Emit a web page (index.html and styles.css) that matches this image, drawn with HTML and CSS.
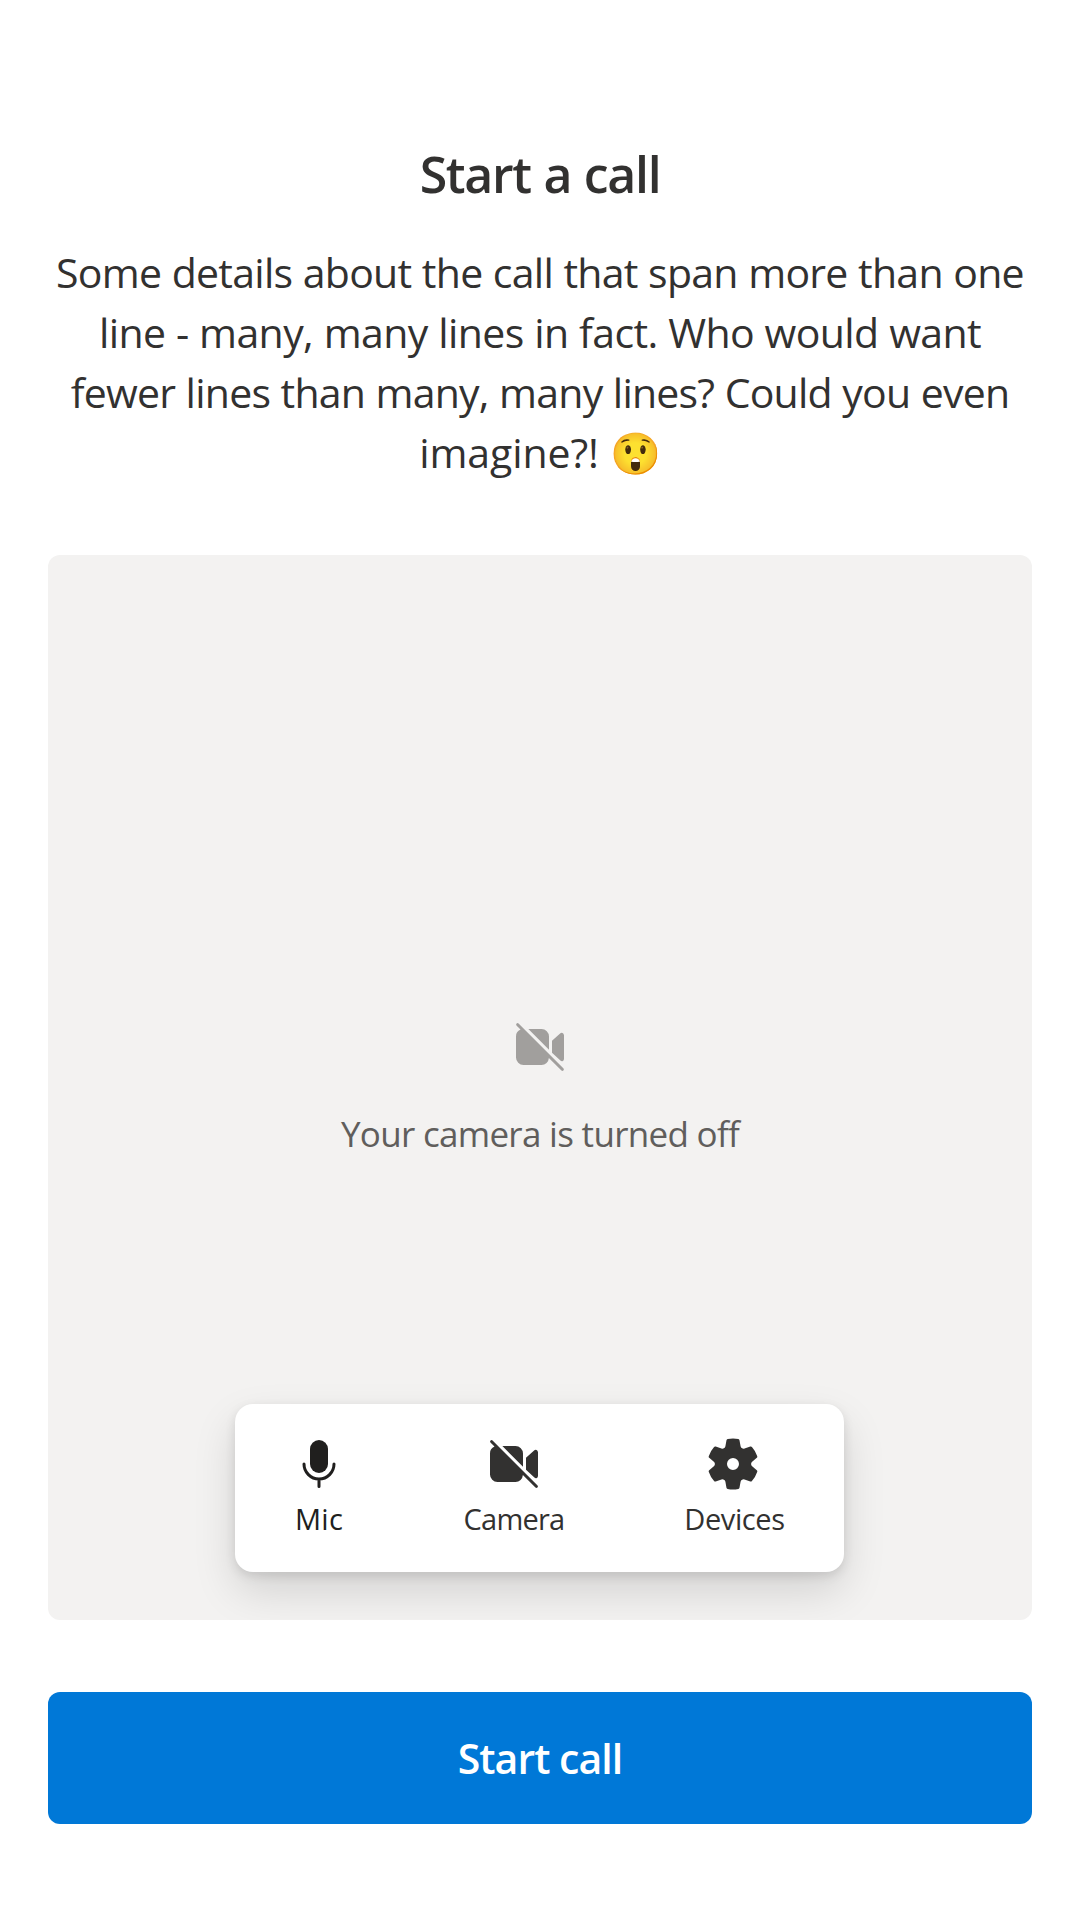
FILE: index.html
```html
<!DOCTYPE html>
<html lang="en">
<head>
<meta charset="utf-8">
<title>Start a call</title>
<link rel="stylesheet" href="styles.css">
</head>
<body>
<svg width="0" height="0" class="defs" aria-hidden="true">
  <symbol id="video-off" viewBox="0 0 20 20">
    <path d="M6.12 4H10.5A2.5 2.5 0 0 1 13 6.5V10.88Z"/>
    <path d="M14 7.9 16.7 5.5Q17.1 5.15 17.5 5.35T18 6.1V13.9Q18 14.45 17.6 14.65T16.8 14.5L14 11.88Z"/>
    <path d="M2.85 2.15a.5.5 0 0 0-.7.7L3.5 4.2A2.5 2.5 0 0 0 2 6.5v7A2.5 2.5 0 0 0 4.5 16h6a2.5 2.5 0 0 0 2.46-2.34l4.19 4.19a.5.5 0 0 0 .7-.7Z"/>
  </symbol>
</svg>
<main class="screen">
  <h1 class="title">Start a call</h1>
  <p class="details">
    <span class="line l1">Some details about the call that span more than one</span>
    <span class="line l2">line - many, many lines in fact. Who would want</span>
    <span class="line l3">fewer lines than many, many lines? Could you even</span>
    <span class="line l4">imagine?! <span class="emoji">😲</span></span>
  </p>
  <section class="preview">
    <div class="status">
      <svg class="icon"><use href="#video-off"/></svg>
      <p class="status-text">Your camera is turned off</p>
    </div>
    <div class="toolbar">
      <button class="tool mic">
        <svg class="icon" viewBox="0 0 20 20"><rect x="7" y="2" width="6" height="11" rx="3"/><path class="stroke" d="M5 10a5 5 0 0 0 10 0M10 15v2.5"/></svg>
        <span class="label">Mic</span>
      </button>
      <button class="tool camera">
        <svg class="icon"><use href="#video-off"/></svg>
        <span class="label">Camera</span>
      </button>
      <button class="tool devices">
        <svg class="icon" viewBox="0 0 20 20"><path d="M1.91 7.38A8.49 8.49 0 0 1 3.69 4.3a.5.5 0 0 1 .54-.13l1.92.68a1 1 0 0 0 1.32-.76l.36-2a.5.5 0 0 1 .4-.4 8.53 8.53 0 0 1 3.55 0c.2.04.35.2.38.4l.37 2a1 1 0 0 0 1.32.76l1.92-.68a.5.5 0 0 1 .54.13 8.49 8.49 0 0 1 1.78 3.08c.06.2 0 .4-.15.54l-1.56 1.32a1 1 0 0 0 0 1.52l1.56 1.32a.5.5 0 0 1 .15.54 8.49 8.49 0 0 1-1.78 3.08.5.5 0 0 1-.54.13l-1.92-.68a1 1 0 0 0-1.32.76l-.37 2a.5.5 0 0 1-.39.4 8.53 8.53 0 0 1-3.55 0 .5.5 0 0 1-.4-.4l-.35-2a1 1 0 0 0-1.32-.76l-1.92.68a.5.5 0 0 1-.54-.13 8.49 8.49 0 0 1-1.78-3.08.5.5 0 0 1 .15-.54l1.56-1.32a1 1 0 0 0 0-1.52L2.06 7.92a.5.5 0 0 1-.15-.54ZM8 10a2 2 0 1 0 4 0 2 2 0 0 0-4 0Z"/></svg>
        <span class="label">Devices</span>
      </button>
    </div>
  </section>
  <button class="start">Start call</button>
</main>
</body>
</html>
```
FILE: styles.css
```css
* { box-sizing: border-box; margin: 0; }
body {
  background: #fff;
  color: #323130;
  font-family: "Open Sans", "Noto Sans", sans-serif;
}
button { border: 0; background: none; padding: 0; font: inherit; color: inherit; }
.defs { position: absolute; }
.screen {
  width: 1080px;
  height: 1920px;
  padding: 138px 48px 96px;
  display: flex;
  flex-direction: column;
  overflow: hidden;
}
.title {
  height: 72px;
  line-height: 72px;
  font-size: 50px;
  font-weight: 600;
  letter-spacing: -1.3px;
  word-spacing: 1px;
  text-align: center;
}
.details {
  margin-top: 32px;
  font-size: 41px;
  line-height: 60px;
  word-spacing: .5px;
  text-align: center;
  white-space: nowrap;
}
.line { display: block; }
.l1 { letter-spacing: -.73px; }
.l2 { letter-spacing: -.6px; }
.l3 { letter-spacing: -.77px; }
.l4 { letter-spacing: -.1px; }
.emoji { font-size: 41px; line-height: 1; }
.preview {
  margin-top: 73px;
  height: 1065px;
  padding-bottom: 48px;
  border-radius: 12px;
  background: #f3f2f1;
  overflow: hidden;
  display: flex;
  flex-direction: column;
  align-items: center;
}
.icon { width: 60px; height: 60px; display: block; fill: currentColor; }
.stroke { fill: none; stroke: currentColor; stroke-linecap: round; }
.status {
  flex: 1;
  padding-top: 462px;
  display: flex;
  flex-direction: column;
  align-items: center;
  color: #a19f9d;
}
.status-text {
  margin-top: 30px;
  font-size: 35px;
  line-height: 54px;
  letter-spacing: -.7px;
  color: #605e5c;
}
.toolbar {
  width: 609px;
  height: 168px;
  margin-right: 1px;
  border-radius: 18px;
  background: #fff;
  display: flex;
  box-shadow: 0 19px 43px rgba(0, 0, 0, .132), 0 4px 11px rgba(0, 0, 0, .108);
}
.tool {
  padding-top: 30px;
  display: flex;
  flex-direction: column;
  align-items: center;
}
.mic { width: 168px; color: #201f1e; }
.camera { width: 222px; }
.devices { width: 216px; }
.label { margin-top: 5px; font-size: 29px; line-height: 40px; }
.mic .label { letter-spacing: .3px; }
.camera .label { letter-spacing: -.75px; }
.devices .label { letter-spacing: -.4px; padding-left: 3px; }
.start {
  margin-top: 72px;
  height: 132px;
  border-radius: 12px;
  background: #0078d7;
  color: #fff;
  font-size: 41px;
  font-weight: 600;
  letter-spacing: -.95px;
}
```
